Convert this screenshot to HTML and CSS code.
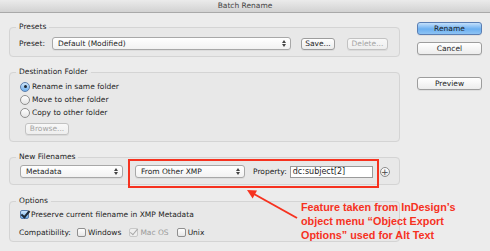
FILE: index.html
```html
<!DOCTYPE html>
<html>
<head>
  <meta charset="utf-8">
  <title>Batch Rename</title>
  <link rel="stylesheet" href="styles.css">
</head>
<body>
<div class="titlebar">Batch Rename</div>
<div class="window">
  <div class="panels">
    <fieldset class="group presets">
      <legend>Presets</legend>
      <div class="row">
        <span class="label">Preset:</span>
        <div class="select preset-select">Default (Modified)<span class="updown"></span></div>
        <button class="btn save">Save...</button>
        <button class="btn delete" disabled>Delete...</button>
      </div>
    </fieldset>

    <fieldset class="group destination">
      <legend>Destination Folder</legend>
      <div class="radio-row"><span class="radio on"></span>Rename in same folder</div>
      <div class="radio-row"><span class="radio"></span>Move to other folder</div>
      <div class="radio-row"><span class="radio"></span>Copy to other folder</div>
      <button class="btn browse" disabled>Browse...</button>
    </fieldset>

    <fieldset class="group filenames">
      <legend>New Filenames</legend>
      <div class="row">
        <div class="select meta-select">Metadata<span class="updown"></span></div>
        <div class="select xmp-select">From Other XMP<span class="updown"></span></div>
        <span class="label prop-label">Property:</span>
        <div class="textbox">dc:subject[2]</div>
        <span class="plus">+</span>
      </div>
    </fieldset>

    <fieldset class="group options">
      <legend>Options</legend>
      <div class="check-row"><span class="check on"></span>Preserve current filename in XMP Metadata</div>
      <div class="check-row compat">
        <span class="label">Compatibility:</span>
        <span class="check"></span><span class="opt">Windows</span>
        <span class="check mac"></span><span class="opt off">Mac OS</span>
        <span class="check"></span><span class="opt">Unix</span>
      </div>
    </fieldset>
  </div>

  <div class="actions">
    <button class="btn action primary">Rename</button>
    <button class="btn action">Cancel</button>
    <button class="btn action preview">Preview</button>
  </div>
</div>

<div class="callout-box"></div>
<svg class="callout-arrow" width="490" height="251" viewBox="0 0 490 251">
  <line x1="297" y1="218" x2="254" y2="194" stroke="#f6321f" stroke-width="2" />
  <polygon points="247,190 257,190.6 252.6,198.4" fill="#f6321f" />
</svg>
<p class="callout">Feature taken from InDesign’s<br>object menu “Object Export<br>Options” used for Alt Text</p>
</body>
</html>
```

FILE: styles.css
```css
* { margin: 0; padding: 0; box-sizing: border-box; }
body { width: 490px; height: 251px; overflow: hidden; background: #ececec; color: #1e1e1e; font-family: "DejaVu Sans", sans-serif; font-size: 7.5px; position: relative; }

.titlebar { height: 13px; line-height: 12px; text-align: center; color: #444; background: linear-gradient(#ebebeb, #d2d2d2); border-bottom: 1px solid #a9a9a9; }

.window { display: flex; padding: 8px 0 0 9px; }
.panels { width: 391px; display: flex; flex-direction: column; gap: 9px; }
.actions { width: 65px; margin-left: 17px; padding-top: 1px; display: flex; flex-direction: column; }

.group { border: 1px solid #d4d4d4; border-radius: 4px; background: #e8e8e8; padding: 0 9px 6px; min-width: 0; }
.group legend { line-height: 12px; padding: 0 3px; margin-left: -3px; color: #1e1e1e; }

.row { display: flex; align-items: center; height: 13px; }
.label { color: #1e1e1e; }

.btn { font: inherit; color: #1e1e1e; height: 12px; line-height: 10px; border: 1px solid #9d9d9d; border-radius: 3px; background: linear-gradient(#ffffff, #ececec); text-align: center; box-shadow: 0 1px 0 rgba(0,0,0,0.06); }
.btn:disabled { color: #a5a5a5; border-color: #c2c2c2; background: linear-gradient(#f8f8f8, #eeeeee); }

.select { position: relative; height: 13px; line-height: 11px; padding-left: 5px; border: 1px solid #a8a8a8; border-radius: 3px; background: linear-gradient(#ffffff, #f2f2f2); box-shadow: 0 1px 0 rgba(0,0,0,0.05); }
.updown { position: absolute; right: 4px; top: 2px; width: 4px; height: 7px; }
.updown::before, .updown::after { content: ""; position: absolute; left: 0; border-left: 2px solid transparent; border-right: 2px solid transparent; }
.updown::before { top: 0; border-bottom: 3px solid #444; }
.updown::after { bottom: 0; border-top: 3px solid #444; }

/* presets */
.presets { padding-top: 4px; }
.preset-select { width: 239px; margin-left: 7px; }
.save { width: 34px; margin-left: 10px; }
.delete { width: 41px; margin-left: 12px; }

/* destination */
.destination { padding-top: 2px; padding-bottom: 6px; }
.radio-row { display: flex; align-items: center; height: 13px; margin-left: 1px; }
.radio { width: 10px; height: 10px; border-radius: 50%; border: 1px solid #8f8f8f; background: linear-gradient(#ffffff, #e4e4e4); margin-right: 2px; position: relative; }
.radio.on { border-color: #5c7fae; background: linear-gradient(#cfe6fb, #6fb0ee); }
.radio.on::after { content: ""; position: absolute; left: 2.5px; top: 2.5px; width: 3px; height: 3px; border-radius: 50%; background: #1d2733; }
.browse { width: 44px; margin: 4px 0 0 6px; display: block; }

/* new filenames */
.filenames { padding-top: 2px; padding-bottom: 6px; }
.meta-select { width: 103px; margin-left: 1px; }
.xmp-select { width: 110px; margin-left: 12px; }
.prop-label { margin-left: 8px; }
.textbox { width: 83px; height: 12px; line-height: 10px; margin-left: 3px; padding-left: 2px; background: #fff; border: 1px solid #9a9a9a; font-size: 8px; }
.plus { width: 10px; height: 10px; margin-left: 7px; border: 1px solid #8c8c8c; border-radius: 50%; background: linear-gradient(#ffffff, #e6e6e6); text-align: center; line-height: 8px; font-size: 9px; color: #444; }

/* options */
.options { padding-top: 1px; padding-bottom: 3px; margin-top: 1px; }
.check-row { display: flex; align-items: center; height: 12px; margin-left: 1px; }
.check-row.compat { margin-top: 6px; margin-left: 0; }
.check { width: 9px; height: 9px; border: 1px solid #8f8f8f; border-radius: 2px; background: linear-gradient(#ffffff, #e6e6e6); margin-right: 2px; position: relative; }
.check.on { border-color: #5c7fae; background: linear-gradient(#cfe6fb, #6fb0ee); }
.check.on::after, .check.mac::after { content: ""; position: absolute; left: 2px; top: -2px; width: 3px; height: 7px; border: solid #1f2a38; border-width: 0 2px 2px 0; transform: rotate(40deg); }
.check.mac { border-color: #c8c8c8; background: #eeeeee; }
.check.mac::after { border-color: #a8a8a8; border-width: 0 1px 1px 0; }
.compat .label { margin-right: 6px; }
.opt { margin-right: 8px; }
.opt.off { color: #9a9a9a; }

/* right column */
.action { height: 13px; margin-bottom: 7px; }
.primary { border-color: #5a7eb3; background: linear-gradient(#c4e0fb, #6cb0f1 55%, #8ec3f3); }
.preview { margin-top: 15px; }

/* annotation */
.callout-box { position: absolute; left: 128px; top: 159px; width: 251px; height: 29px; border: 2px solid #f6321f; }
.callout-arrow { position: absolute; left: 0; top: 0; }
.callout { position: absolute; left: 301px; top: 200px; color: #f6321f; font-family: "Liberation Sans", Arial, sans-serif; font-weight: bold; font-size: 10.8px; line-height: 14px; }
```
